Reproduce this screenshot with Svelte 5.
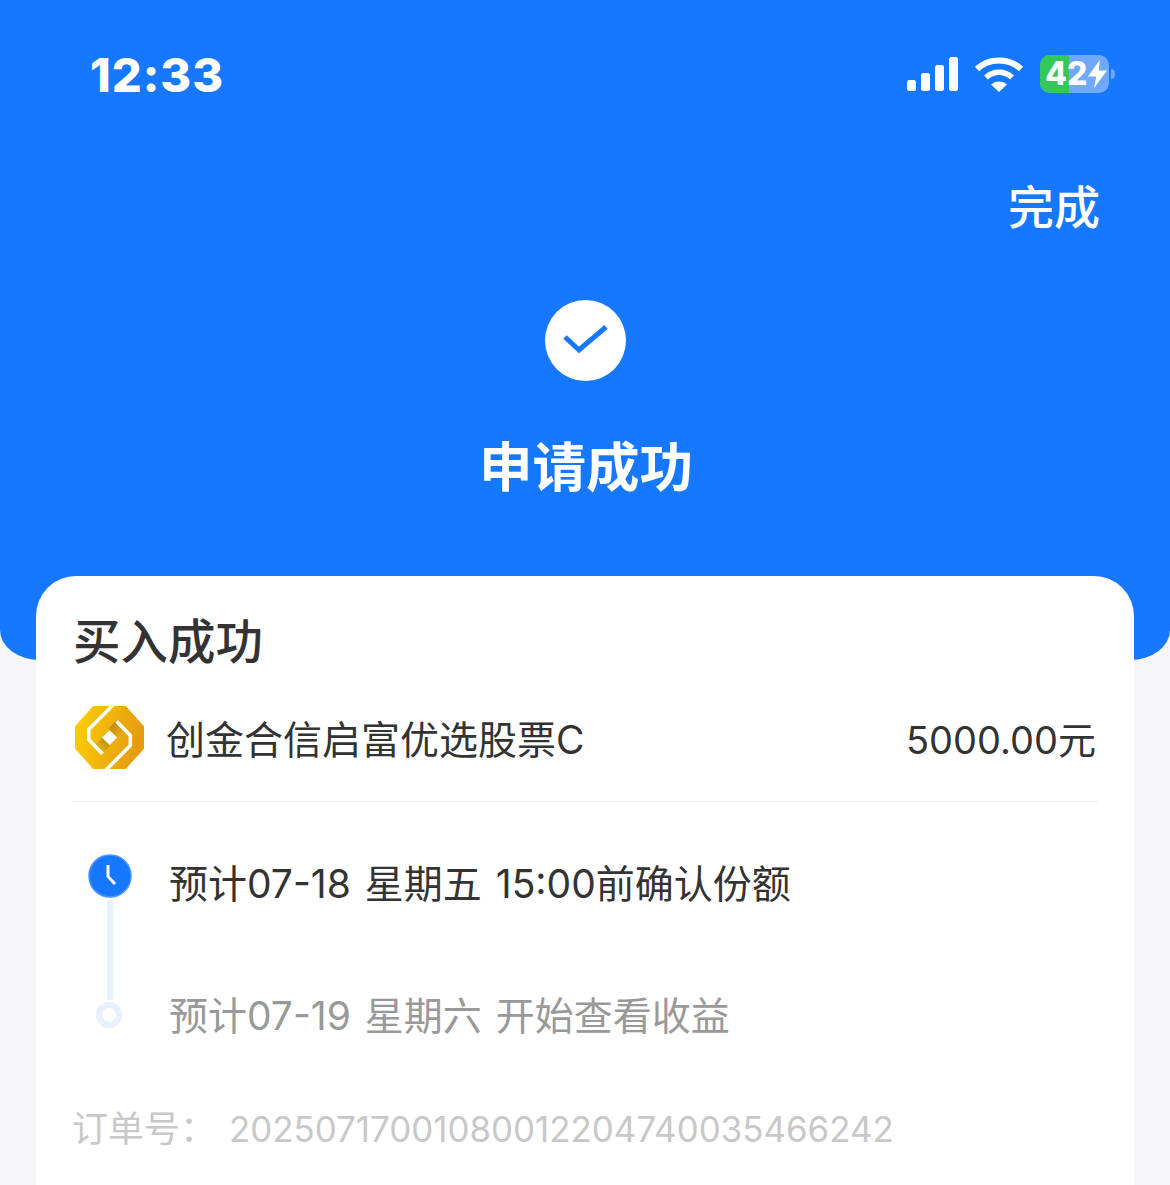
<script>
  const steps = [
    { text: '预计07-18 星期五 15:00前确认份额', active: true },
    { text: '预计07-19 星期六 开始查看收益', active: false }
  ];
</script>

<div class="page">
  <header class="hero">
    <div class="status-bar">
      <span class="time">12:33</span>
      <div class="status-icons">
        <svg width="52" height="36" viewBox="0 0 52 36" fill="#fff">
          <rect x="1" y="24" width="9" height="11" rx="2.5" />
          <rect x="15" y="17" width="9" height="18" rx="2.5" />
          <rect x="29" y="9" width="9" height="26" rx="2.5" />
          <rect x="43" y="1" width="9" height="34" rx="2.5" />
        </svg>
        <svg class="wifi" width="50" height="36" viewBox="0 0 50 36" fill="none">
          <path d="M3 13C15 1.500 35 1.500 47 13" stroke="#fff" stroke-width="6" stroke-linecap="butt" />
          <path d="M12 21.500C19.500 14.500 30.500 14.500 38 21.500" stroke="#fff" stroke-width="5.500" />
          <path d="M25 36L17 28.500C21.500 24.500 28.500 24.500 33 28.500Z" fill="#fff" />
        </svg>
        <div class="battery">
          <div class="battery-body">
            <div class="battery-fill"></div>
            <span class="battery-num">42</span>
            <svg class="bolt" width="19" height="30" viewBox="0 0 16 24" fill="#fff">
              <path d="M10 0L0 14H7L5 24L16 9H9Z" />
            </svg>
          </div>
          <div class="battery-tip"></div>
        </div>
      </div>
    </div>
    <div class="nav"><span class="done">完成</span></div>
    <div class="check">
      <svg width="46" height="32" viewBox="0 0 46 32" fill="none">
        <path d="M2 12L16 25L43 2" stroke="#1677ff" stroke-width="5" />
      </svg>
    </div>
    <h1 class="title">申请成功</h1>
  </header>

  <main class="card">
    <h2 class="card-title">买入成功</h2>
    <div class="fund">
      <svg class="logo" width="69" height="63" viewBox="0 0 68 62">
        <defs>
          <linearGradient id="gold" x1="0" y1="0" x2="1" y2="0.2">
            <stop offset="0" stop-color="#fdcf04" />
            <stop offset="1" stop-color="#e59c10" />
          </linearGradient>
          <linearGradient id="foldLow" x1="0" y1="1" x2="1" y2="0">
            <stop offset="0" stop-color="#fbd008" />
            <stop offset="1" stop-color="#b57c12" />
          </linearGradient>
          <linearGradient id="foldHigh" x1="0" y1="0" x2="1" y2="1">
            <stop offset="0" stop-color="#b57c12" />
            <stop offset="1" stop-color="#f3b70c" />
          </linearGradient>
        </defs>
        <path d="M18 0H50L68 20V42L50 62H18L0 42V20Z" fill="url(#gold)" />
        <path d="M18 40L27 31L35 39L26 48Z" fill="url(#foldLow)" />
        <path d="M41 14L50 23L42 31L33 22Z" fill="url(#foldHigh)" />
        <path d="M37.500 -1L13.500 23V33L27 47" fill="none" stroke="#fff" stroke-width="3.500" />
        <path d="M30.500 63L54.500 39V29L41 15" fill="none" stroke="#fff" stroke-width="3.500" />
        <path d="M34 24L41.500 31L34 38.500L26.500 31Z" fill="#fff" />
      </svg>
      <span class="fund-name">创金合信启富优选股票C</span>
      <span class="fund-amount">5000.00元</span>
    </div>
    <ul class="timeline">
      {#each steps as step}
        <li class="step" class:muted={!step.active}>
          <div class="marker">
            {#if step.active}
              <svg width="44" height="44" viewBox="0 0 44 44">
                <circle cx="22" cy="22" r="21" fill="#1677ff" stroke="#4a94ff" stroke-width="1.500" />
                <path d="M20 11V22.500L27 30" fill="none" stroke="#fff" stroke-width="3" />
              </svg>
              <div class="line"></div>
            {:else}
              <div class="dot"></div>
            {/if}
          </div>
          <span class="step-text">{step.text}</span>
        </li>
      {/each}
    </ul>
    <div class="order">
      <span class="order-label">订单号：</span>
      <span class="order-no">20250717001080012204740035466242</span>
    </div>
  </main>
</div>

<style>
  :global(body) {
    margin: 0;
    background: #f5f5fa;
  }

  .page {
    height: 1185px;
    overflow: hidden;
    background: #f5f5fa;
    font-family: Inter, "Noto Sans CJK SC", "Noto Sans", sans-serif;
  }

  .hero {
    height: 660px;
    box-sizing: border-box;
    background: #1677ff;
    border-radius: 0 0 40px 40px / 0 0 30px 30px;
    color: #fff;
    display: flex;
    flex-direction: column;
    align-items: center;
  }

  .status-bar {
    align-self: stretch;
    display: flex;
    justify-content: space-between;
    align-items: center;
    height: 148px;
    padding: 0 55px 0 90px;
    box-sizing: border-box;
  }

  .time {
    font-family: Inter, sans-serif;
    font-weight: 800;
    font-size: 47px;
    letter-spacing: 1px;
    color: #fff;
  }

  .status-icons {
    display: flex;
    align-items: center;
    gap: 16px;
  }

  .battery {
    display: flex;
    align-items: center;
    gap: 2px;
  }

  .battery-body {
    position: relative;
    width: 69px;
    height: 38px;
    border-radius: 10px;
    background: #6ea8ff;
    overflow: hidden;
    display: flex;
    align-items: center;
    padding-left: 5px;
    box-sizing: border-box;
  }

  .battery-fill {
    position: absolute;
    inset: 0 40px 0 0;
    background: #34c759;
  }

  .battery-num {
    position: relative;
    font-family: Inter, sans-serif;
    font-weight: 800;
    font-size: 32px;
    color: #fff;
    line-height: 1;
  }

  .bolt {
    position: relative;
    margin-left: 1px;
  }

  .battery-tip {
    width: 4px;
    height: 10px;
    background: #6ea8ff;
    border-radius: 0 4px 4px 0;
  }

  .nav {
    align-self: stretch;
    display: flex;
    justify-content: flex-end;
    padding-right: 70px;
    height: 152px;
  }

  .done {
    font-size: 46px;
    font-weight: 500;
    line-height: 118px;
    height: 118px;
  }

  .check {
    width: 81px;
    height: 81px;
    border-radius: 50%;
    background: #fff;
    display: flex;
    align-items: center;
    justify-content: center;
    padding-left: 2px;
    box-sizing: border-box;
  }

  .title {
    margin: 51px 0 0 2px;
    font-size: 53.500px;
    line-height: 72px;
    font-weight: 700;
  }

  .card {
    position: relative;
    margin: -84px 36px 0;
    padding: 37px 36px 0;
    height: 700px;
    box-sizing: border-box;
    background: #fff;
    border-radius: 40px;
  }

  .card-title {
    margin: 0 0 0 1px;
    font-size: 47.500px;
    line-height: 58px;
    font-weight: 500;
    color: #333;
  }

  .fund {
    display: flex;
    align-items: center;
    height: 70px;
    margin-top: 31px;
    padding-bottom: 29px;
    border-bottom: 1px solid #e9e9ee;
  }

  .logo {
    margin-left: 3px;
    flex: none;
  }

  .fund-name {
    margin-left: 22px;
    font-size: 39px;
    color: #333;
  }

  .fund-amount {
    margin-left: auto;
    margin-right: 2px;
    font-size: 38px;
    color: #333;
  }

  .timeline {
    list-style: none;
    margin: 0;
    padding: 52px 0 0;
  }

  .step {
    display: flex;
    align-items: flex-start;
    height: 132px;
    color: #333;
  }

  .step.muted {
    color: #999;
  }

  .marker {
    width: 97px;
    flex: none;
    display: flex;
    flex-direction: column;
    align-items: center;
    padding-right: 22px;
    box-sizing: border-box;
  }

  .line {
    width: 6px;
    height: 100px;
    margin-top: 2px;
    background: #e6f0ff;
  }

  .dot {
    width: 26px;
    height: 26px;
    margin-top: 16px;
    margin-right: 1px;
    border: 6px solid #e6f0ff;
    border-radius: 50%;
    box-sizing: border-box;
  }

  .step-text {
    font-size: 39px;
    line-height: 60px;
    white-space: pre;
    word-spacing: 3px;
  }

  .order {
    margin-top: -14px;
    font-size: 36px;
    line-height: 50px;
    color: #c8c8c8;
    display: flex;
  }

  .order-label {
    width: 157px;
  }

  .order-no {
    font-size: 34.900px;
  }
</style>
